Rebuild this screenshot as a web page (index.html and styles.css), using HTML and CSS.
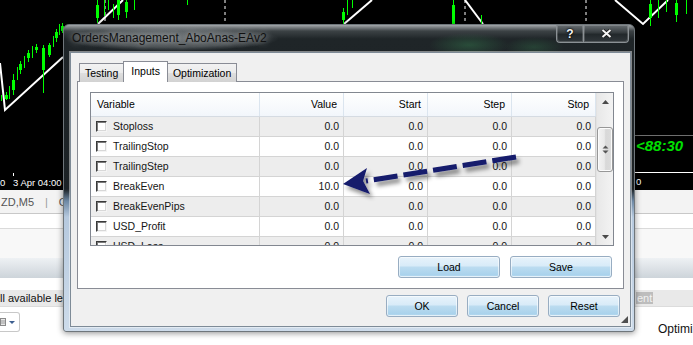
FILE: index.html
```html
<!DOCTYPE html>
<html lang="en">
<head>
    <meta charset="UTF-8">
    <title>OrdersManagement_AboAnas-EAv2</title>
    <link rel="stylesheet" href="styles.css">
</head>
<body>
<div class="screen">

    <!-- chart behind the dialog -->
    <div class="chart">
        <svg width="693" height="190" viewBox="0 0 693 190">
            <g class="grid-v">
                <line x1="105" y1="0" x2="105" y2="60"/>
                <line x1="225" y1="0" x2="225" y2="60"/>
                <line x1="465" y1="0" x2="465" y2="60"/>
                <line x1="586" y1="0" x2="586" y2="60"/>
            </g>
            <g class="trend">
                <polyline points="0,63 5,110 63,57"/>
                <line x1="98" y1="24" x2="123" y2="0"/>
                <line x1="344" y1="24" x2="372" y2="0"/>
                <line x1="465" y1="0" x2="483" y2="24"/>
                <polyline points="615,0 643,24 668,0"/>
            </g>
            <g class="wick">
                <line x1="1.5" y1="95" x2="1.5" y2="101"/>
                <line x1="6.5" y1="92" x2="6.5" y2="100"/>
                <line x1="9.5" y1="86" x2="9.5" y2="99"/>
                <line x1="13.5" y1="74" x2="13.5" y2="95"/>
                <line x1="17.5" y1="67" x2="17.5" y2="80"/>
                <line x1="20.5" y1="61" x2="20.5" y2="74"/>
                <line x1="24.5" y1="56" x2="24.5" y2="68"/>
                <line x1="28.5" y1="50" x2="28.5" y2="62"/>
                <line x1="32.5" y1="46" x2="32.5" y2="58"/>
                <line x1="36.5" y1="44" x2="36.5" y2="53"/>
                <line x1="43.5" y1="45" x2="43.5" y2="93"/>
                <line x1="49.5" y1="43" x2="49.5" y2="57"/>
                <line x1="53.5" y1="36" x2="53.5" y2="47"/>
                <line x1="56.5" y1="29" x2="56.5" y2="42"/>
                <line x1="59.5" y1="24" x2="59.5" y2="35"/>
                <line x1="62.5" y1="23" x2="62.5" y2="33"/>
                <line x1="97.5" y1="0" x2="97.5" y2="23"/>
                <line x1="104.5" y1="0" x2="104.5" y2="16"/>
                <line x1="108.5" y1="0" x2="108.5" y2="10"/>
                <line x1="113.5" y1="4" x2="113.5" y2="18"/>
                <line x1="118.5" y1="0" x2="118.5" y2="20"/>
                <line x1="126.5" y1="0" x2="126.5" y2="18"/>
                <line x1="134.5" y1="0" x2="134.5" y2="10"/>
                <line x1="187.5" y1="0" x2="187.5" y2="5"/>
                <line x1="343.5" y1="8" x2="343.5" y2="24"/>
                <line x1="347.5" y1="0" x2="347.5" y2="15"/>
                <line x1="352.5" y1="0" x2="352.5" y2="8"/>
                <line x1="453.5" y1="0" x2="453.5" y2="24"/>
                <line x1="481.5" y1="15" x2="481.5" y2="24"/>
                <line x1="650.5" y1="0" x2="650.5" y2="26"/>
                <line x1="658.5" y1="0" x2="658.5" y2="18"/>
                <line x1="666.5" y1="0" x2="666.5" y2="12"/>
                <line x1="676.5" y1="0" x2="676.5" y2="22"/>
                <line x1="686.5" y1="0" x2="686.5" y2="14"/>
            </g>
            <g class="body">
                <rect x="5" y="95" width="3" height="4"/>
                <rect x="12" y="80" width="3" height="10"/>
                <rect x="19" y="64" width="3" height="6"/>
                <rect x="27" y="53" width="3" height="5"/>
                <rect x="35" y="47" width="3" height="3"/>
                <rect x="42" y="48" width="3" height="22"/>
                <rect x="48" y="45" width="3" height="10"/>
                <rect x="55" y="32" width="3" height="6"/>
                <rect x="61" y="26" width="3" height="5"/>
                <rect x="96" y="5" width="3" height="13"/>
                <rect x="117" y="0" width="3" height="15"/>
                <rect x="125" y="2" width="3" height="10"/>
                <rect x="342" y="12" width="3" height="8"/>
                <rect x="452" y="5" width="3" height="19"/>
                <rect x="649" y="4" width="3" height="14"/>
                <rect x="675" y="3" width="3" height="12"/>
            </g>
            <line class="price" x1="600" y1="135.5" x2="693" y2="135.5"/>
            <text class="timer" x="636" y="151">&lt;88:30</text>
            <line class="axis" x1="600" y1="172.5" x2="693" y2="172.5"/>
            <line class="axis" x1="13.5" y1="173" x2="13.5" y2="176"/>
            <text class="axis-label" x="0" y="186">0</text>
            <text class="axis-label" x="13" y="186">3 Apr 04:00</text>
            <text class="axis-label" x="636" y="185">0</text>
        </svg>
    </div>

    <!-- terminal panels under the chart -->
    <div class="term">
        <div class="t-tabs"><span>ZD,M5</span><span class="bar">|</span><span>G</span></div>
        <div class="t-gap1"></div>
        <div class="t-gap2"></div>
        <div class="t-band"></div>
        <div class="t-gap3"></div>
        <div class="t-status">
            <span>ll available leaders</span>
            <span class="status-right"><span class="sel">ent</span></span>
        </div>
        <div class="t-foot">
            <div class="dd">
                <svg width="19" height="18" viewBox="0 0 19 18">
                    <rect x="0.5" y="5.5" width="5" height="7" fill="#e8e8e8" stroke="#8a8a8a"/>
                    <path d="M1 8h4M1 10h4" stroke="#9a9a9a"/>
                    <path d="M9 8h6l-3 3z" fill="#3d5f8f"/>
                </svg>
            </div>
            <div class="foot-right">Optimiz</div>
        </div>
    </div>

    <!-- Expert properties dialog -->
    <div class="dialog">
        <div class="titlebar">
            <div class="title">OrdersManagement_AboAnas-EAv2</div>
            <div class="caption">
                <div class="cap-btn help">?</div>
                <div class="cap-btn close">
                    <svg width="11" height="9" viewBox="0 0 11 9">
                        <path d="M1.5 1 L9.5 8 M9.5 1 L1.5 8" stroke="#1a1a1a" stroke-width="3.6"/>
                        <path d="M1.5 1 L9.5 8 M9.5 1 L1.5 8" stroke="#f4f4f4" stroke-width="2"/>
                    </svg>
                </div>
            </div>
        </div>

        <div class="client">
            <div class="tabstrip">
                <div class="tab">Testing</div>
                <div class="tab active">Inputs</div>
                <div class="tab">Optimization</div>
            </div>

            <div class="panel">
                <div class="list">
                    <div class="grid">
                        <div class="head">
                            <div class="h-var">Variable</div>
                            <div>Value</div>
                            <div>Start</div>
                            <div>Step</div>
                            <div>Stop</div>
                        </div>
                        <div class="rows">
                            <div class="row"><div class="var"><span class="cb"></span>Stoploss</div><div>0.0</div><div>0.0</div><div>0.0</div><div>0.0</div></div>
                            <div class="row"><div class="var"><span class="cb"></span>TrailingStop</div><div>0.0</div><div>0.0</div><div>0.0</div><div>0.0</div></div>
                            <div class="row"><div class="var"><span class="cb"></span>TrailingStep</div><div>0.0</div><div>0.0</div><div>0.0</div><div>0.0</div></div>
                            <div class="row"><div class="var"><span class="cb"></span>BreakEven</div><div>10.0</div><div>0.0</div><div>0.0</div><div>0.0</div></div>
                            <div class="row"><div class="var"><span class="cb"></span>BreakEvenPips</div><div>0.0</div><div>0.0</div><div>0.0</div><div>0.0</div></div>
                            <div class="row"><div class="var"><span class="cb"></span>USD_Profit</div><div>0.0</div><div>0.0</div><div>0.0</div><div>0.0</div></div>
                            <div class="row"><div class="var"><span class="cb"></span>USD_Loss</div><div>0.0</div><div>0.0</div><div>0.0</div><div>0.0</div></div>
                        </div>
                    </div>
                    <div class="scroll">
                        <div class="sb-arrow">
                            <svg width="7" height="4" viewBox="0 0 7 4"><path d="M0 4L3.5 0L7 4z" fill="#4a4a4a"/></svg>
                        </div>
                        <div class="track">
                            <div class="thumb">
                                <svg width="7" height="9" viewBox="0 0 7 9"><path d="M0.5 3.5L3.5 0.5L6.5 3.5zM0.5 5.5L3.5 8.5L6.5 5.5z" fill="#555"/></svg>
                            </div>
                        </div>
                        <div class="sb-arrow">
                            <svg width="7" height="4" viewBox="0 0 7 4"><path d="M0 0L3.5 4L7 0z" fill="#4a4a4a"/></svg>
                        </div>
                    </div>
                </div>
                <div class="btn-row">
                    <button class="btn wide">Load</button>
                    <button class="btn wide">Save</button>
                </div>
            </div>

            <div class="footer">
                <button class="btn">OK</button>
                <button class="btn">Cancel</button>
                <button class="btn">Reset</button>
            </div>

            <svg class="grip" width="7" height="7" viewBox="0 0 7 7"><path d="M7 0V7H0z" fill="#4f4f4f"/></svg>
        </div>
    </div>

    <!-- dashed pointer drawn over the dialog -->
    <svg class="arrow" width="190" height="60" viewBox="335 145 190 60">
        <defs>
            <filter id="shade" x="-20%" y="-40%" width="140%" height="180%">
                <feDropShadow dx="3" dy="4" stdDeviation="2" flood-color="#000" flood-opacity="0.45"/>
            </filter>
        </defs>
        <g filter="url(#shade)">
            <path d="M516 157 L366 181" stroke="#131a6c" stroke-width="5" stroke-dasharray="24 6" fill="none"/>
            <polygon points="343,184 367,168 363,181 370,194" fill="#131a6c"/>
        </g>
    </svg>

</div>
</body>
</html>
```

FILE: styles.css
```css
body {
    margin: 0;
    background-color: #000;
    font-family: "Liberation Sans", Arial, sans-serif;
}
.screen {
    position: relative;
    width: 693px;
    height: 345px;
    overflow: hidden;
}

/* chart */
.chart {
    height: 190px;
    background-color: #000;
}
.chart svg {
    display: block;
}
.grid-v line {
    stroke: #fff;
    stroke-dasharray: 3 3;
}
.trend line, .trend polyline {
    stroke: #fff;
    stroke-width: 2;
    fill: none;
}
.wick line {
    stroke: #00ff00;
    stroke-width: 1;
}
.body rect {
    fill: #00ff00;
}
.price {
    stroke: #6e6e6e;
}
.axis {
    stroke: #fff;
}
.timer {
    font: italic bold 15px "Liberation Sans", Arial, sans-serif;
    fill: #00e000;
}
.axis-label {
    font: 9.5px "Liberation Sans", Arial, sans-serif;
    fill: #fff;
}

/* terminal area */
.term {
    height: 155px;
    background-color: #fff;
    font-size: 11px;
    color: #222;
}
.t-tabs {
    height: 24px;
    box-sizing: border-box;
    background-color: #f3f3f3;
    border-bottom: 1px solid #c8c8c8;
    display: flex;
    align-items: center;
    gap: 11px;
    padding-left: 1px;
    color: #555;
}
.t-tabs .bar {
    color: #999;
}
.t-gap1 {
    height: 14px;
    border-bottom: 1px solid #dadada;
}
.t-gap2 {
    height: 29px;
    background-color: #f8f8f8;
}
.t-band {
    height: 20px;
    background: linear-gradient(#eef1f4, #cdd4da);
}
.t-gap3 {
    height: 12px;
}
.t-status {
    height: 16px;
    background-color: #e9e9e9;
    display: flex;
    align-items: center;
    justify-content: space-between;
    color: #111;
}
.status-right {
    width: 57px;
}
.sel {
    background-color: #bdbdbd;
    color: #f2f2f2;
    padding: 0 1px;
}
.t-foot {
    height: 39px;
    box-sizing: border-box;
    border-top: 1px solid #dcdcdc;
    display: flex;
    justify-content: space-between;
    align-items: flex-start;
}
.dd {
    margin-top: 5px;
    width: 20px;
    height: 20px;
    box-sizing: border-box;
    border: 1px solid #c8c8c8;
    border-left: none;
    border-radius: 0 3px 3px 0;
}
.dd svg {
    display: block;
}
.foot-right {
    width: 35px;
    margin-top: 15px;
    white-space: nowrap;
    font-size: 12px;
    color: #111;
}

/* dialog window */
.dialog {
    position: absolute;
    left: 63px;
    top: 24px;
    width: 572px;
    height: 308px;
    box-sizing: border-box;
    border: 1px solid #6f767b;
    border-radius: 6px 6px 3px 3px;
    background: linear-gradient(#a3a7aa 0, #3c4245 6px, #1f2528 14px, #1c2225 164px, #6d88a4 176px, #b6c9de 192px, #cddbea 100%);
    box-shadow: 0 1px 6px rgba(0, 0, 0, 0.45);
    display: flex;
    flex-direction: column;
    font-size: 10.5px;
    color: #000;
}
.titlebar {
    height: 27px;
    display: flex;
    align-items: flex-start;
    background:
        radial-gradient(ellipse 40px 12px at 405px 20px, rgba(60, 150, 90, 0.35), transparent),
        radial-gradient(ellipse 30px 10px at 470px 22px, rgba(60, 150, 90, 0.25), transparent);
}
.title {
    margin-top: 1px;
    padding: 5px 12px 6px 8px;
    font-size: 12px;
    color: #111;
    background: radial-gradient(ellipse closest-side, rgba(170, 176, 179, 0.55), rgba(150, 156, 160, 0.35) 70%, transparent);
    text-shadow: 0 0 6px rgba(255, 255, 255, 0.5), 0 0 12px rgba(255, 255, 255, 0.3);
}
.caption {
    display: flex;
    margin-left: auto;
    margin-right: 5px;
}
.cap-btn {
    height: 18px;
    box-sizing: border-box;
    border: 1px solid #8b9195;
    border-top: none;
    box-shadow: inset 0 0 0 1px rgba(255, 255, 255, 0.18);
    background: linear-gradient(#6a7074, #353b3e 45%, #22282b 55%, #30363a);
    display: flex;
    align-items: center;
    justify-content: center;
}
.help {
    width: 27px;
    border-radius: 0 0 0 4px;
    border-right: none;
    font: bold 12px "Liberation Sans", Arial, sans-serif;
    color: #f4f4f4;
    text-shadow: 0 0 2px #000, 0 0 2px #000;
}
.close {
    width: 46px;
    border-radius: 0 0 4px 0;
}
.close svg {
    display: block;
}

.client {
    position: relative;
    flex: 1;
    margin: 0 3px 4px 6px;
    border: 1px solid #7e8b97;
    box-shadow: 0 0 0 1px rgba(255, 255, 255, 0.45);
    background-color: #f0f0f0;
    padding: 8px 6px 0 6px;
    display: flex;
    flex-direction: column;
}

/* tabs */
.tabstrip {
    position: relative;
    z-index: 1;
    height: 21px;
    margin-bottom: -1px;
    padding-left: 2px;
    display: flex;
    align-items: flex-end;
}
.tab {
    height: 19px;
    box-sizing: border-box;
    border: 1px solid #898c95;
    border-bottom: none;
    padding: 0 5px;
    line-height: 18px;
    background: linear-gradient(#f2f2f2, #ebebeb 50%, #dedede 51%, #d2d2d2);
}
.tab + .tab {
    margin-left: -1px;
}
.tab.active {
    position: relative;
    height: 21px;
    padding: 0 7px;
    line-height: 19px;
    background: #fff;
}

.panel {
    border: 1px solid #898c95;
    background-color: #fff;
    padding: 10px 9px 10px 12px;
}

/* parameters list */
.list {
    height: 154px;
    box-sizing: border-box;
    border: 1px solid #828790;
    display: flex;
}
.grid {
    width: 505px;
    overflow: hidden;
}
.head, .row {
    display: grid;
    grid-template-columns: 169px 84px 84px 84px 84px;
}
.head {
    height: 24px;
    box-sizing: border-box;
    border-bottom: 1px solid #d5dbe2;
    background: linear-gradient(#ffffff, #f2f6fb);
}
.head div {
    border-right: 1px solid #dbe5ef;
    line-height: 23px;
    padding-right: 6px;
    text-align: right;
}
.head .h-var {
    text-align: left;
    padding-left: 6px;
}
.row {
    height: 20px;
    box-sizing: border-box;
    border-bottom: 1px solid #d4d4d4;
}
.rows .row:nth-child(odd) {
    background-color: #ededed;
}
.row div {
    border-right: 1px solid #d4d4d4;
    line-height: 19px;
    padding-right: 4px;
    text-align: right;
    color: #151515;
}
.row .var {
    display: flex;
    align-items: center;
    padding-left: 5px;
    text-align: left;
}
.cb {
    width: 11px;
    height: 11px;
    box-sizing: border-box;
    margin-right: 6px;
    border: 1px solid;
    border-color: #3a3a3a #f4f4f4 #f4f4f4 #3a3a3a;
    box-shadow: inset 1px 1px 0 #7a7a7a, inset -1px -1px 0 #d8d8d8;
    background-color: #fff;
}

/* scrollbar */
.scroll {
    width: 17px;
    box-sizing: border-box;
    border-left: 1px solid #e2e2e2;
    background: linear-gradient(to right, #e8e8e8, #f3f3f3);
    display: flex;
    flex-direction: column;
}
.sb-arrow {
    height: 17px;
    display: flex;
    align-items: center;
    justify-content: center;
}
.track {
    flex: 1;
}
.thumb {
    height: 45px;
    margin: 17px 0 0 0;
    box-sizing: border-box;
    border: 1px solid #979797;
    border-radius: 3px;
    box-shadow: inset 0 0 0 1px #fbfbfb;
    background: linear-gradient(to right, #f3f3f3, #e9e9e9 45%, #d8d8d8 55%, #dcdcdc);
    display: flex;
    align-items: center;
    justify-content: center;
}

/* buttons */
.btn-row {
    display: flex;
    justify-content: flex-end;
    gap: 10px;
    margin-top: 10px;
    padding-right: 2px;
}
.footer {
    display: flex;
    justify-content: flex-end;
    gap: 9px;
    margin-top: 6px;
    padding-right: 4px;
}
.btn {
    width: 72px;
    height: 22px;
    padding: 0;
    font: inherit;
    color: #000;
    border: 1px solid #98adc2;
    border-radius: 3px;
    box-shadow: inset 0 0 0 1px rgba(255, 255, 255, 0.6);
    background: linear-gradient(#e8f3fb 0%, #d8ebf8 45%, #bcdcf0 50%, #a9d2ec 90%, #c2e0f3 100%);
}
.btn.wide {
    width: 102px;
}
.grip {
    position: absolute;
    right: 2px;
    bottom: 3px;
}

/* pointer */
.arrow {
    position: absolute;
    left: 335px;
    top: 145px;
}
```
